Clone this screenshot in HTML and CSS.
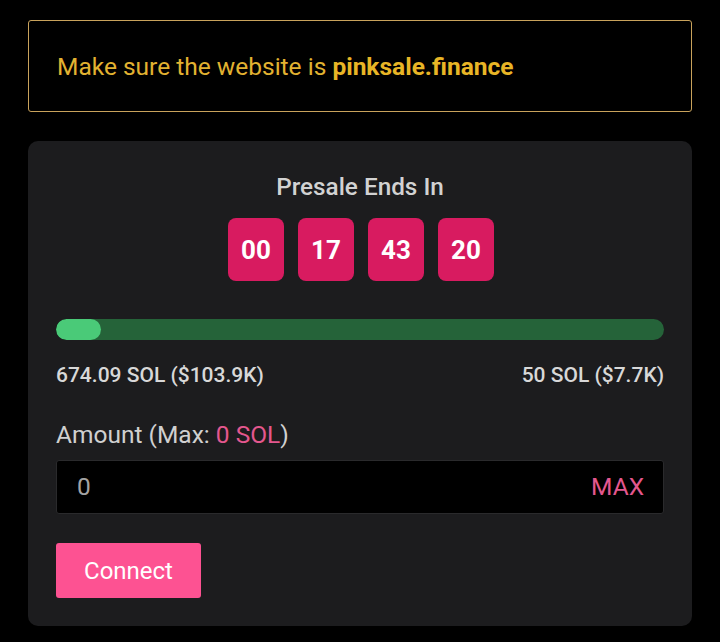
FILE: index.html
```
<!DOCTYPE html>
<html>
<head>
<meta charset="utf-8">
<link rel="stylesheet" href="styles.css">
</head>
<body>
<div class="page">
  <div class="notice">
    <p>Make sure the website is <b>pinksale.finance</b></p>
  </div>
  <div class="card">
    <div class="title">Presale Ends In</div>
    <div class="timer">
      <div class="cell">00</div>
      <div class="cell">17</div>
      <div class="cell">43</div>
      <div class="cell">20</div>
    </div>
    <div class="bar"><div class="fill" style="width:45px"></div></div>
    <div class="labels">
      <span>674.09 SOL ($103.9K)</span>
      <span>50 SOL ($7.7K)</span>
    </div>
    <div class="amount">Amount (Max: <span class="pink">0 SOL</span>)</div>
    <div class="input">
      <span class="value">0</span>
      <span class="max">MAX</span>
    </div>
    <button class="connect">Connect</button>
  </div>
</div>
</body>
</html>
```
FILE: styles.css
```
* { box-sizing: border-box; }
html, body {
  margin: 0;
  padding: 0;
  background: #000;
  font-family: Roboto, "Liberation Sans", sans-serif;
}
.page {
  padding: 20px 28px;
}
.notice {
  height: 92px;
  border: 1px solid #c9a35c;
  border-radius: 3px;
  display: flex;
  align-items: center;
  padding: 1px 28px 0;
}
.notice p {
  margin: 0;
  font-size: 24.5px;
  color: #e2b231;
}
.notice b {
  font-weight: 700;
  color: #e8b526;
}
.card {
  margin-top: 29px;
  background: #1c1c1e;
  border-radius: 10px;
  padding: 32px 28px 28px;
}
.title {
  text-align: center;
  font-size: 24.3px;
  line-height: 28px;
  font-weight: 500;
  color: #d2d2d2;
}
.timer {
  margin-top: 17px;
  display: flex;
  justify-content: center;
  gap: 14px;
  padding-left: 2px;
}
.cell {
  width: 56px;
  height: 63px;
  border-radius: 8px;
  background: #d81b60;
  color: #fff;
  font-size: 26px;
  font-weight: 700;
  display: flex;
  align-items: center;
  justify-content: center;
}
.bar {
  margin-top: 38px;
  height: 21px;
  border-radius: 11px;
  background: #256339;
  overflow: hidden;
}
.fill {
  height: 100%;
  border-radius: 11px;
  background: #4aca78;
}
.labels {
  margin-top: 22px;
  display: flex;
  justify-content: space-between;
  font-size: 21px;
  line-height: 26px;
  font-weight: 500;
  color: #d8d8d8;
}
.amount {
  margin-top: 33px;
  font-size: 24.5px;
  line-height: 28px;
  color: #d0d0d0;
}
.pink { color: #e4578e; }
.input {
  margin-top: 11px;
  height: 54px;
  background: #000;
  border: 1px solid #2a2a2c;
  border-radius: 3px;
  display: flex;
  align-items: center;
  justify-content: space-between;
  padding: 0 19px 0 20px;
  font-size: 24.5px;
  line-height: 28px;
}
.value { color: #a3a3a3; }
.max { color: #e4578e; }
.connect {
  margin-top: 29px;
  width: 145px;
  height: 55px;
  padding: 0;
  border: none;
  border-radius: 3px;
  background: #fd5292;
  color: #fff;
  font-family: Roboto, "Liberation Sans", sans-serif;
  font-size: 24px;
  display: block;
}
```
